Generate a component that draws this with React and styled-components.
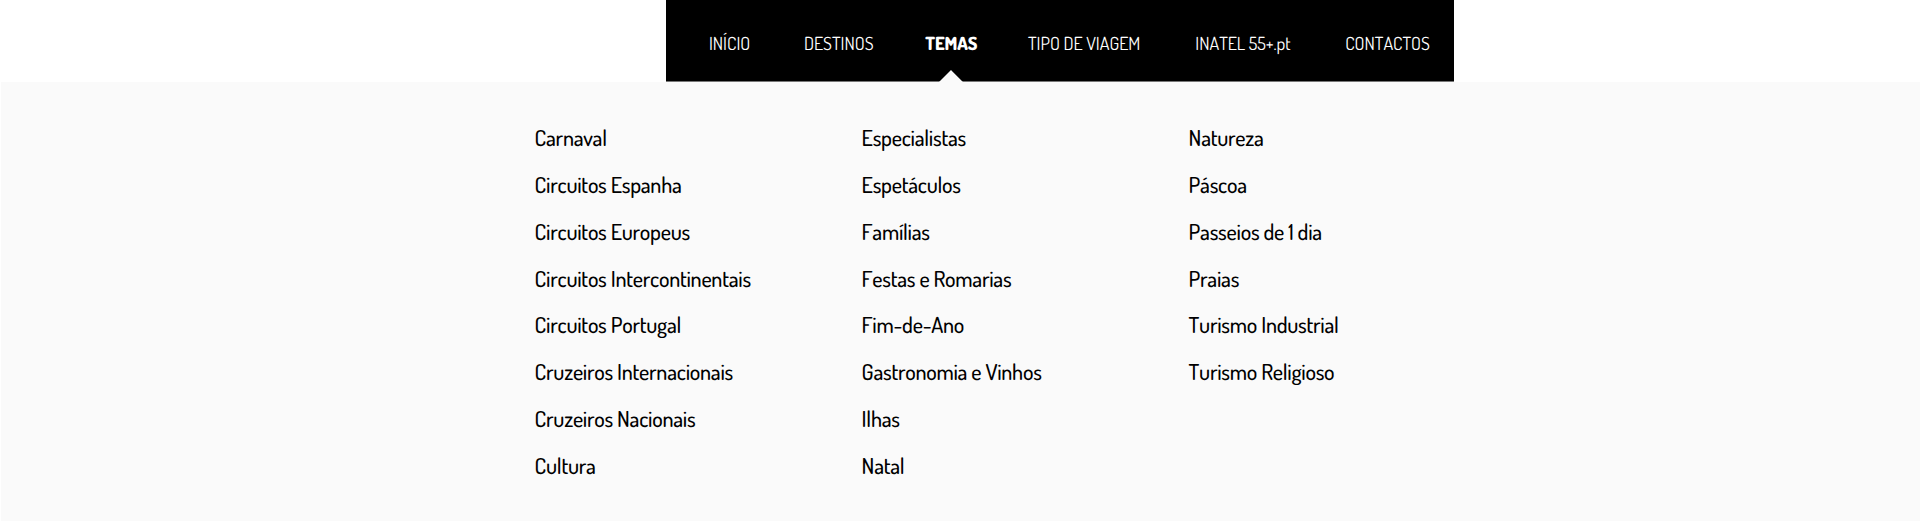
import React from "react";
import styled, { createGlobalStyle } from "styled-components";

const GlobalStyle = createGlobalStyle`
  * { box-sizing: border-box; }
  body {
    margin: 0;
    background: #fff;
    font-family: Dosis, Lato, "Open Sans", sans-serif;
    font-kerning: none;
    text-rendering: geometricPrecision;
    overflow: hidden;
  }
`;

const Page = styled.div`
  height: 521px;
  display: flex;
  flex-direction: column;
`;

const NavBar = styled.nav`
  width: 788px;
  height: 82px;
  margin-left: 666px;
  padding: 6px 0 0 42.9px;
  display: flex;
  align-items: center;
  background: #000;
  border-bottom: 1px solid #777;
`;

const NavItem = styled.a`
  position: relative;
  flex: none;
  width: ${(p) => p.$width}px;
  height: 100%;
  display: flex;
  align-items: center;
  color: #fff;
  font-size: 18px;
  line-height: 24px;
  letter-spacing: ${(p) => (p.$active ? "-0.1px" : "-0.02px")};
  white-space: nowrap;
  font-weight: ${(p) => (p.$active ? 800 : 400)};
`;

const Pointer = styled.span`
  position: absolute;
  left: 13.7px;
  bottom: -1px;
  width: 24px;
  height: 12px;
  background: #fafafa;
  clip-path: polygon(50% 0, 100% 100%, 0 100%);
`;

const Panel = styled.section`
  flex: 1;
  margin-left: 1px;
  padding: 32.8px 0 0 533.6px;
  display: grid;
  grid-template-columns: repeat(3, 327px);
  align-items: start;
  background: #fafafa;
`;

const Column = styled.ul`
  margin: 0;
  padding: 0;
  list-style: none;
`;

const Row = styled.li`
  height: 46.8px;
  display: flex;
  align-items: center;
  color: #000;
  font-size: 22px;
  font-weight: 500;
  line-height: 30px;
  letter-spacing: -0.26px;
  white-space: nowrap;
`;

const nav = [
  { text: "INÍCIO", width: 95 },
  { text: "DESTINOS", width: 121.4 },
  { text: "TEMAS", width: 102.7, active: true },
  { text: "TIPO DE VIAGEM", width: 167.3 },
  { text: "INATEL 55+.pt", width: 149.9 },
  { text: "CONTACTOS", width: 86 },
];

const columns = [
  [
    "Carnaval",
    "Circuitos Espanha",
    "Circuitos Europeus",
    "Circuitos Intercontinentais",
    "Circuitos Portugal",
    "Cruzeiros Internacionais",
    "Cruzeiros Nacionais",
    "Cultura",
  ],
  [
    "Especialistas",
    "Espetáculos",
    "Famílias",
    "Festas e Romarias",
    "Fim-de-Ano",
    "Gastronomia e Vinhos",
    "Ilhas",
    "Natal",
  ],
  [
    "Natureza",
    "Páscoa",
    "Passeios de 1 dia",
    "Praias",
    "Turismo Industrial",
    "Turismo Religioso",
  ],
];

export default function App() {
  return (
    <Page>
      <GlobalStyle />
      <NavBar>
        {nav.map((n) => (
          <NavItem key={n.text} $width={n.width} $active={n.active}>
            {n.text}
            {n.active && <Pointer />}
          </NavItem>
        ))}
      </NavBar>
      <Panel>
        {columns.map((items) => (
          <Column key={items[0]}>
            {items.map((text) => (
              <Row key={text}>{text}</Row>
            ))}
          </Column>
        ))}
      </Panel>
    </Page>
  );
}
